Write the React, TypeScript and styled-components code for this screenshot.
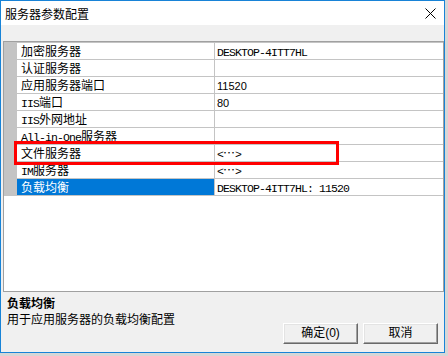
import React from "react";
import styled, { createGlobalStyle } from "styled-components";

const GRID = "#c4c4c4";
const CJK = `"Noto Sans CJK SC", "Noto Sans", sans-serif`;

const GlobalStyle = createGlobalStyle`
  html, body { margin: 0; padding: 0; background: #d6d6d6; }
  body { font-family: ${CJK}; font-size: 12px; color: #000; }
  * { box-sizing: border-box; }
`;

const Window = styled.div`
  width: 445px;
  height: 353px;
  border: 1px solid #1883d7;
  display: flex;
  flex-direction: column;
  background: #f0f0f0;
`;

const TitleBar = styled.div`
  height: 24px;
  background: #fff;
  display: flex;
  align-items: center;
  justify-content: space-between;
  padding: 1px 8px 0 4px;
`;

const Title = styled.span`
  font-family: ${CJK};
  font-size: 12px;
  line-height: 16px;
  color: #000;
`;

const CloseIcon = styled.svg`
  width: 11px;
  height: 11px;
  display: block;
`;

const Client = styled.div`
  flex: 1;
  display: flex;
  flex-direction: column;
  padding: 16px 0 0 2px;
`;

const Grid = styled.div`
  position: relative;
  height: 251px;
  border: 1px solid #a0a0a0;
  background: #fff;
`;

const Rows = styled.div`
  border-bottom: 1px solid ${GRID};
`;

const Row = styled.div`
  display: grid;
  grid-template-columns: 13px 197px 228px;
  height: 17px;
  border-top: 1px solid ${GRID};
`;

const Margin = styled.div`
  background: ${GRID};
`;

const NameCell = styled.div<{ $selected?: boolean }>`
  padding-left: 4px;
  line-height: 16px;
  font-family: ${CJK};
  font-size: 12px;
  white-space: nowrap;
  overflow: hidden;
  background: ${(p) => (p.$selected ? "#0078d7" : "#fff")};
  color: ${(p) => (p.$selected ? "#fff" : "#000")};
`;

const ValueCell = styled.div`
  border-left: 1px solid ${GRID};
  padding-left: 2px;
  line-height: 16px;
  font-family: ${CJK};
  font-size: 12px;
  white-space: nowrap;
  overflow: hidden;
`;

const Latin = styled.span`
  font-family: "Liberation Mono", "DejaVu Sans Mono", monospace;
  font-size: 11.5px;
  letter-spacing: -0.9px;
`;

const Plain = styled.span`
  font-family: "Liberation Sans", Arial, sans-serif;
  font-size: 11px;
`;

const Annotation = styled.div`
  position: absolute;
  left: 10px;
  top: 99px;
  width: 325px;
  height: 24px;
  border: 3px solid #ff0000;
  pointer-events: none;
`;

const Footer = styled.div`
  flex: 1;
  display: flex;
  justify-content: space-between;
  padding: 3px 6px 8px 4px;
`;

const Description = styled.div`
  display: flex;
  flex-direction: column;
  font-family: ${CJK};
  font-size: 12px;
  line-height: 16px;
`;

const DescTitle = styled.div`
  font-weight: bold;
`;

const DescText = styled.div``;

const Buttons = styled.div`
  display: flex;
  gap: 5px;
  align-self: flex-end;
`;

const Button = styled.button`
  width: 75px;
  height: 21px;
  padding: 0;
  background: #f0f0f0;
  border-style: solid;
  border-width: 1px;
  border-color: #ffffff #696969 #696969 #ffffff;
  box-shadow: inset -1px -1px 0 #a0a0a0, inset 1px 1px 0 #e3e3e3;
  font-family: "Liberation Sans", ${CJK};
  font-size: 12px;
  color: #000;
  line-height: 17px;
`;

const mixed = (text: string) =>
  text
    .split(/([\x20-\x7e]+)/)
    .filter(Boolean)
    .map((part, i) =>
      /^[\x20-\x7e]+$/.test(part) ? (
        <Latin key={i}>{part}</Latin>
      ) : (
        <span key={i}>{part}</span>
      )
    );

type RowData = { name: string; value: string; plain?: boolean; selected?: boolean };

const rows: RowData[] = [
  { name: "加密服务器", value: "DESKTOP-4ITT7HL" },
  { name: "认证服务器", value: "" },
  { name: "应用服务器端口", value: "11520", plain: true },
  { name: "IIS端口", value: "80", plain: true },
  { name: "IIS外网地址", value: "" },
  { name: "All-in-One服务器", value: "" },
  { name: "文件服务器", value: "<…>" },
  { name: "IM服务器", value: "<…>" },
  { name: "负载均衡", value: "DESKTOP-4ITT7HL: 11520", selected: true },
];

export default function App() {
  return (
    <>
      <GlobalStyle />
      <Window>
        <TitleBar>
          <Title>服务器参数配置</Title>
          <CloseIcon viewBox="0 0 11 11">
            <path d="M0.5 0.5 L10.5 10.5 M10.5 0.5 L0.5 10.5" stroke="#000" strokeWidth="1" fill="none" />
          </CloseIcon>
        </TitleBar>
        <Client>
          <Grid>
            <Rows>
              {rows.map((r) => (
                <Row key={r.name}>
                  <Margin />
                  <NameCell $selected={r.selected}>{mixed(r.name)}</NameCell>
                  <ValueCell>{r.plain ? <Plain>{r.value}</Plain> : mixed(r.value)}</ValueCell>
                </Row>
              ))}
            </Rows>
            <Annotation />
          </Grid>
          <Footer>
            <Description>
              <DescTitle>负载均衡</DescTitle>
              <DescText>用于应用服务器的负载均衡配置</DescText>
            </Description>
            <Buttons>
              <Button>确定(0)</Button>
              <Button>取消</Button>
            </Buttons>
          </Footer>
        </Client>
      </Window>
    </>
  );
}
